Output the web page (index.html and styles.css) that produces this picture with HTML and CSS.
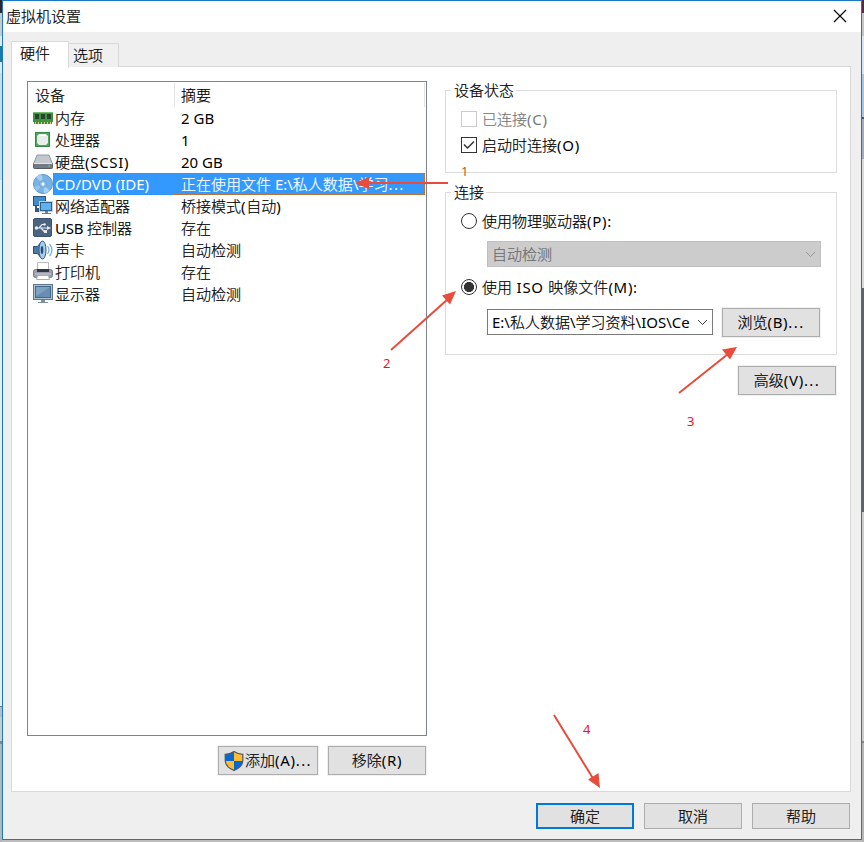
FILE: index.html
```html
<!DOCTYPE html>
<html lang="zh-CN">
<head>
<meta charset="utf-8">
<title>虚拟机设置</title>
<link rel="stylesheet" href="styles.css">
</head>
<body>
<div class="edge edge-left"></div>
<main class="window">
  <header class="titlebar">
    <h1>虚拟机设置</h1>
    <svg class="close" width="14" height="14" viewBox="0 0 14 14"><path d="M1 1 13 13M13 1 1 13" stroke="#000" stroke-width="1.1" fill="none"/></svg>
  </header>
  <nav class="tabs"><div class="tab active">硬件</div><div class="tab">选项</div></nav>
  <section class="panel">
    <div class="devices">
      <div class="list">
        <div class="head"><span class="name">设备</span><span class="summary">摘要</span></div>
        <div class="row"><svg class="icon" viewBox="0 0 20 20"><path d="M0 4h20v10h-1v2H1v-2H0z" fill="#3d9340"/><path d="M0 4h20v1H0z" fill="#75bd73"/><path d="M2 6h4v5H2zM8 6h4v5H8zM14 6h4v5h-4z" fill="#26452a"/><path d="M2.500 14v2M5.500 14v2M8.500 14v2M11.500 14v2M14.500 14v2M17.500 14v2" stroke="#dfc96d"/></svg><span class="name">内存</span><span class="summary"><i>2 GB</i></span></div>
        <div class="row"><svg class="icon" viewBox="0 0 20 20"><path d="M2 2h15v15H2z" fill="#2f8d43"/><path d="M3 3h13v13H3z" fill="#4da95a"/><path d="M6 4h7l2 2v7l-2 2H6l-2-2V6z" fill="#e9ecea"/><path d="M6 5h7v1H6z" fill="#fff"/></svg><span class="name">处理器</span><span class="summary"><i>1</i></span></div>
        <div class="row"><svg class="icon" viewBox="0 0 20 20"><path d="M4 3h12l3.500 9H.5z" fill="#c3c8ce" stroke="#9298a0"/><rect x=".5" y="11.500" width="19" height="5" rx="1" fill="#747b85" stroke="#555c66"/><path d="M1 11.500h18" stroke="#e3e6e9"/><path d="M15 14h2" stroke="#78d46e"/></svg><span class="name">硬盘<i class="wide">(SCSI)</i></span><span class="summary"><i>20 GB</i></span></div>
        <div class="row selected"><svg class="icon" viewBox="0 0 20 20"><circle cx="10" cy="10" r="9.500" fill="#79b3e5" stroke="#5d95cc"/><path d="M10 10 3 3a9 9 0 0 1 6-2zM10 10l7 7a9 9 0 0 1-6 2z" fill="#a5cff0"/><path d="M10 10 1 13a9 9 0 0 0 3 4z" fill="#97c3ea"/><circle cx="10" cy="10" r="3.500" fill="#91bfe9" stroke="#6ca2d6"/><circle cx="10" cy="10" r="1.500" fill="#fff"/></svg><span class="name"><i>CD/DVD (IDE)</i></span><span class="summary">正在使用文件<i> E:\</i>私人数据<i>\</i>学习<i class="dots">...</i></span></div>
        <div class="row"><svg class="icon" viewBox="0 0 20 20"><rect x=".5" y=".500" width="12" height="9" fill="#438cc9" stroke="#28547f"/><path d="M3 10v5h3M3 13h5" stroke="#355979" stroke-width="2" fill="none"/><rect x="6.500" y="5.500" width="13" height="10" fill="#8fcaf4" stroke="#c0d1df"/><rect x="7.500" y="6.500" width="11" height="8" fill="#61b1ec" stroke="#285f92"/><path d="M12 15h3v2h3v1H9v-1h3z" fill="#6c8198"/></svg><span class="name">网络适配器</span><span class="summary">桥接模式<i class="wide">(</i>自动<i class="wide">)</i></span></div>
        <div class="row"><svg class="icon" viewBox="0 0 20 20"><rect x=".5" y=".500" width="18" height="18" rx="1.500" fill="#4c647f" stroke="#3d546e"/><path d="M3 10h13M6 10l3-3.500h3M8 10l3 3.500h3" stroke="#e6ebf0" stroke-width="1.200" fill="none"/><circle cx="3.500" cy="10" r="1.800" fill="#e6ebf0"/><circle cx="11.500" cy="6.500" r="1.300" fill="#e6ebf0"/><path d="m14 8 4 2-4 2zM11 12h3v3h-3z" fill="#e6ebf0"/></svg><span class="name"><i class="tight">USB </i>控制器</span><span class="summary">存在</span></div>
        <div class="row"><svg class="icon" viewBox="0 0 20 20"><path d="M.5 6.500h4L9 1v18l-4.500-5.500h-4z" fill="#4e7aa4" stroke="#284f78"/><ellipse cx="9.500" cy="10" rx="3.500" ry="9" fill="#a6cfec" stroke="#2f5d8c"/><ellipse cx="9" cy="10" rx="1.300" ry="4" fill="#274d75"/><path d="M14.500 6q3 4 0 8M16.500 4q5 6 0 12" stroke="#72aede" fill="none" stroke-width="1.200"/></svg><span class="name">声卡</span><span class="summary">自动检测</span></div>
        <div class="row"><svg class="icon" viewBox="0 0 20 20"><path d="M4.500.5h11V9h-11z" fill="#fff" stroke="#b8bcc3"/><rect x=".5" y="7.500" width="19" height="8" rx="2" fill="#989da9" stroke="#777d89"/><path d="M4 7h12v3H4z" fill="#323741"/><path d="M2 12h16" stroke="#ced1d7"/><path d="M4.500 13.500h11l1 4h-13z" fill="#fff" stroke="#a8acb4"/></svg><span class="name">打印机</span><span class="summary">存在</span></div>
        <div class="row"><svg class="icon" viewBox="0 0 20 20"><rect x=".5" y=".500" width="19" height="15" fill="#b1c2cf" stroke="#60788f"/><rect x="2.500" y="2.500" width="15" height="11" fill="#688fb3" stroke="#446988"/><path d="M3 3h14L3 12z" fill="#7fa3c3"/><path d="M8 16h4v2h3v1H5v-1h3z" fill="#7d91a2"/></svg><span class="name">显示器</span><span class="summary">自动检测</span></div>
      </div>
      <div class="actions">
        <button class="btn add"><svg width="20" height="20" viewBox="0 0 20 20"><path d="M10 .6Q6 3.300 1.200 3.300V9q0 7 8.800 10.400Q18.800 16 18.800 9V3.300Q14 3.300 10 .6Z" fill="#ffbc2e"/><path d="M10 .6V10H1.200V3.300Q6 3.300 10 .6ZM10 10h8.800q-.6 6.400-8.800 9.400Z" fill="#0868cf"/><path d="M10 .6Q6 3.300 1.200 3.300V9q0 7 8.800 10.400Q18.800 16 18.800 9V3.300Q14 3.300 10 .6Z" fill="none" stroke="#4e5963" stroke-width="1.200"/></svg><span class="label">添加<i class="wide">(A)</i><i class="dots">...</i></span></button>
        <button class="btn"><span class="label">移除<i class="wide">(R)</i></span></button>
      </div>
    </div>
    <div class="settings">
      <fieldset class="status">
        <legend>设备状态</legend>
        <label class="option disabled"><span class="check"></span>已连接<i class="wide">(C)</i></label>
        <label class="option"><span class="check"><svg width="14" height="14" viewBox="0 0 14 14"><path d="m2 6.500 3.500 3.500 6.500-6.500" fill="none" stroke="#333" stroke-width="1.500"/></svg></span>启动时连接<i class="wide">(O)</i></label>
      </fieldset>
      <fieldset class="connection">
        <legend>连接</legend>
        <label class="option"><span class="radio"></span>使用物理驱动器<i class="wide">(P):</i></label>
        <div class="combo disabled"><span>自动检测</span><svg width="11" height="7" viewBox="0 0 11 7"><path d="m1 1 4.500 4.500L10 1" fill="none" stroke="#999"/></svg></div>
        <label class="option"><span class="radio on"></span>使用<i class="wide"> ISO </i>映像文件<i class="wide">(M):</i></label>
        <div class="iso">
          <div class="combo"><span class="path"><i>E:\</i>私人数据<i>\</i>学习资料<i>\IOS\Ce</i></span><svg width="11" height="7" viewBox="0 0 11 7"><path d="m1 1 4.500 4.500L10 1" fill="none" stroke="#444"/></svg></div>
          <button class="btn"><span class="label">浏览<i class="wide">(B)</i><i class="dots">...</i></span></button>
        </div>
      </fieldset>
      <button class="btn advanced"><span class="label">高级<i class="wide">(V)</i><i class="dots">...</i></span></button>
    </div>
  </section>
  <footer class="footer"><button class="btn default"><span>确定</span></button><button class="btn"><span>取消</span></button><button class="btn"><span>帮助</span></button></footer>
</main>
<div class="edge edge-right"></div>
<div class="notes">
  <svg width="864" height="842" viewBox="0 0 864 842" fill="#e74c3c" stroke="none">
    <g stroke="#e74c3c" stroke-width="2"><path d="M448 183H368M391 350 448 299M679 393 728 354M554 715 594 780"/></g>
    <path d="m355 183 14-6v12zM456 291l-6 13.500-8-9zM737 347l-7 12.500-8-10zM600 788l-12-8.500 10.500-6.500z"/>
  </svg>
  <span class="note n1">1</span><span class="note n2">2</span><span class="note n3">3</span><span class="note n4">4</span>
</div>
</body>
</html>
```
FILE: styles.css
```css
* { box-sizing: border-box; }
body {
  margin: 0;
  width: 864px;
  height: 842px;
  overflow: hidden;
  display: flex;
  position: relative;
  background: #bdbdbd;
  color: #000;
  font: 300 15px/22px "Noto Sans CJK SC", sans-serif;
  -webkit-text-stroke: .2px currentColor;
}
i { font: normal 400 15px "Noto Sans", sans-serif; line-height: 1; white-space: pre; -webkit-text-stroke: 0; }
.wide { letter-spacing: .7px; }
.tight { letter-spacing: -.2px; }
.dots { letter-spacing: 1.4px; }
.edge { width: 2px; height: 842px; }
.edge-left { background: linear-gradient(#35222b 0 13px, #c6cbd2 13px 36px, #e3e7ec 36px 46px, #187baa 46px 62px, #dce8f2 62px 73px, #c9dcec 73px 180px, #e8eaec 180px 706px, #707780 706px 707px, #b4bdce 707px 717px, #ccc 717px 741px, #888 741px 744px, #b5b5b5 744px); }
.edge-right { background: linear-gradient(#572b45 0 13px, #c5c5c5 13px 36px, #d9e3ed 36px 74px, #a9c5df 74px 117px, #505761 117px 119px, #a4acbb 119px 159px, #d7d9db 159px 288px, #60646a 288px 512px, #c9cbcd 512px 741px, #888 741px 743px, #b5b5b5 743px); }
.window { width: 860px; height: 840px; background: #efefef; border: 1px solid #1979c6; }
.titlebar { height: 31px; padding: 0 14px 1px 3px; background: #fff; display: flex; justify-content: space-between; align-items: center; }
h1 { margin: 0 0 1px; font-size: 15px; font-weight: inherit; }
.tabs { display: flex; align-items: flex-end; height: 35px; padding: 0 8px; }
.tab { width: 50px; height: 24px; padding-left: 4px; border: 1px solid #d9d9d9; border-left: 0; border-bottom: 0; background: #f0f0f0; }
.tab.active { width: 58px; height: 27px; padding-left: 8px; margin-bottom: -1px; border-left: 1px solid #d9d9d9; background: #fff; position: relative; }
.panel { display: flex; gap: 18px; width: 840px; height: 726px; margin-left: 8px; margin-top: -1px; padding: 14px 0 0 15px; border: 1px solid #d9d9d9; background: #fff; }
.devices { width: 400px; }
.list { height: 655px; border: 1px solid #7f848c; padding: 1px; }
.head { display: flex; height: 24px; line-height: 24px; padding-left: 6px; border-right: 1px solid #e1e1e1; }
.head .name { width: 140px; border-right: 1px solid #e1e1e1; }
.head .summary { padding-left: 6px; }
.row { display: flex; height: 22px; padding-left: 4px; white-space: nowrap; }
.icon { width: 20px; height: 20px; margin-top: 1px; flex: none; }
.row .name { width: 121px; padding-left: 2px; flex: none; }
.row .summary { flex: 1; padding-left: 7px; }
.selected .name, .selected .summary { background: #3399ff; color: #fff; border-top: 1px dotted #b97032; border-bottom: 1px dotted #b97032; line-height: 20px; }
.selected .name { border-left: 1px dotted #b97032; padding-left: 1px; }
.selected .summary { border-right: 1px dotted #b97032; }
.actions { display: flex; justify-content: flex-end; gap: 10px; margin-top: 10px; padding-right: 1px; }
.btn { width: 98px; height: 29px; padding: 0; display: flex; align-items: center; justify-content: center; border: 1px solid #adadad; background: #e1e1e1; color: #000; font: inherit; flex: none; box-shadow: 0 0 0 1px #f0f0f0; }
.btn .label { margin-bottom: 2px; white-space: nowrap; }
.add { width: 100px; gap: 1px; }
.settings { width: 392px; margin-top: -1px; }
fieldset { display: block; min-width: 0; margin: 0; border: 1px solid #dcdcdc; padding: 5px 15px 0; }
legend { height: 21px; line-height: 19px; padding: 0 2px 0 3px; margin-left: -10px; }
.status { height: 93px; }
.connection { height: 173px; margin-top: 9px; }
.option { display: flex; align-items: center; height: 26px; }
.check, .radio { width: 16px; height: 16px; border: 1px solid #333; margin-right: 5px; flex: none; background: #fff; }
.check svg { display: block; }
.radio { border-radius: 50%; }
.radio.on { background: radial-gradient(circle, #333 0 4.8px, #fff 5.3px); }
.option.disabled { color: #777; }
.disabled .check { border-color: #ccc; }
.combo { height: 26px; width: 334px; border: 1px solid #7a7a7a; background: #fff; display: flex; align-items: center; justify-content: space-between; padding: 0 4px 1px 4px; }
.combo svg { margin-top: 1px; }
.connection > .combo { margin: 7px 0 7px 26px; }
.combo.disabled { background: #ccc; border-color: #bfbfbf; color: #6d6d6d; }
.iso { display: flex; gap: 9px; margin: 8px 0 0 26px; }
.iso .combo { width: 226px; margin-top: 1px; }
.path { white-space: nowrap; }
.advanced { margin: 11px 1px 0 auto; }
.footer { display: flex; justify-content: flex-end; gap: 10px; padding: 11px 11px 0 0; }
.footer .btn { height: 26px; box-shadow: none; }
.footer .default { border: 2px solid #0078d7; }
.notes { position: absolute; inset: 0; pointer-events: none; -webkit-text-stroke: 0; }
.notes svg { display: block; }
.note { position: absolute; color: #f0102a; font: 13px/16px "Noto Sans", sans-serif; }
.n1 { left: 461px; top: 163px; color: #cc5a14; }
.n2 { left: 383px; top: 355px; }
.n3 { left: 687px; top: 413px; }
.n4 { left: 583px; top: 721px; }
```
